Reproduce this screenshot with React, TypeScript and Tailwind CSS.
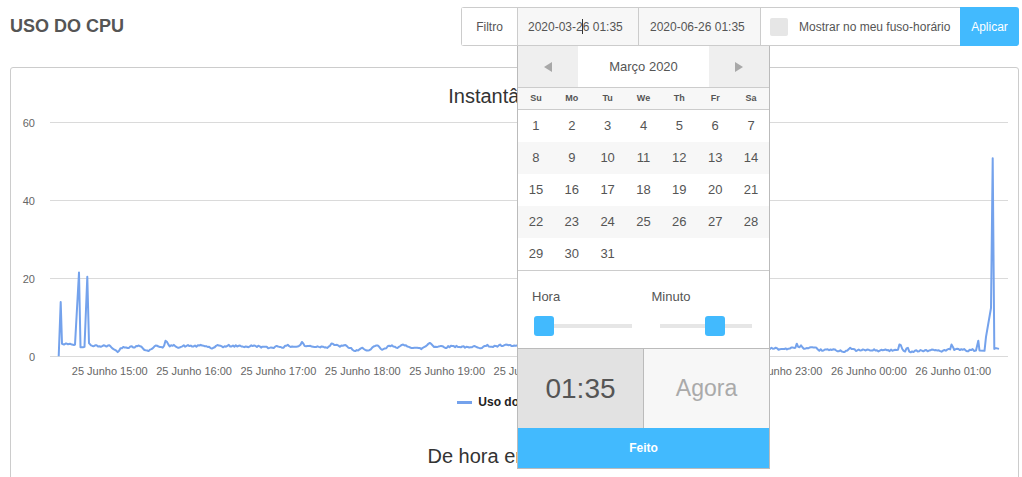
import { useMemo } from "react";

const days = [
  [1, 2, 3, 4, 5, 6, 7],
  [8, 9, 10, 11, 12, 13, 14],
  [15, 16, 17, 18, 19, 20, 21],
  [22, 23, 24, 25, 26, 27, 28],
  [29, 30, 31],
];

const weekDays = ["Su", "Mo", "Tu", "We", "Th", "Fr", "Sa"];

const hourLabels = [
  "25 Junho 15:00",
  "25 Junho 16:00",
  "25 Junho 17:00",
  "25 Junho 18:00",
  "25 Junho 19:00",
  "25 Junho 20:00",
  "25 Junho 21:00",
  "25 Junho 22:00",
  "25 Junho 23:00",
  "26 Junho 00:00",
  "26 Junho 01:00",
];

// small seeded generator so the series is the same on every render
const mulberry32 = (a: number) => () => {
  a |= 0;
  a = (a + 0x6d2b79f5) | 0;
  let t = Math.imul(a ^ (a >>> 15), 1 | a);
  t = (t + Math.imul(t ^ (t >>> 7), 61 | t)) ^ t;
  return ((t ^ (t >>> 14)) >>> 0) / 4294967296;
};

// [center x, amplitude, width]
const bumps: [number, number, number][] = [
  [117, -1.3, 3],
  [148, -1.1, 3],
  [166, 1.5, 1],
  [213, -0.6, 3],
  [268, -0.6, 3],
  [302, 1.2, 1],
  [332, 0.9, 1.5],
  [357, -1.3, 5],
  [370, -1.0, 3],
  [383, -1.0, 3],
  [420, -0.8, 3],
  [430, 0.9, 2],
  [470, -0.6, 3],
  [797, 1.2, 1.2],
  [801, 1.0, 1],
  [850, 0.4, 2],
  [900, 1.8, 0.8],
  [907, 1.2, 0.8],
  [952, 1.7, 0.8],
];

const baseLevel = (x: number) => {
  if (x < 560) return 2.6;
  if (x < 700) return 2.3;
  if (x < 800) return 1.9;
  if (x < 830) return 1.9 - ((x - 800) / 30) * 0.4;
  return 1.5;
};

const buildSeries = () => {
  const rnd = mulberry32(42);
  const pts: [number, number][] = [
    [58.7, 0],
    [60.7, 13.9],
    [62, 3.2],
    [64, 3.0],
    [66, 3.3],
    [68, 3.1],
    [70, 3.2],
    [72, 3.0],
    [74, 2.9],
    [75, 3.0],
    [79, 21.5],
    [80.5, 2.3],
    [83, 2.3],
    [84.5, 2.4],
    [87.3, 20.4],
    [89, 3.4],
    [91, 2.8],
  ];
  let n = 0;
  for (let x = 92.4; x < 975; x += 1.406) {
    n = 0.55 * n + 0.45 * (rnd() - 0.5) * 1.4;
    let v = baseLevel(x) + n;
    for (const [c, a, w] of bumps) {
      v += a * Math.exp(-((x - c) * (x - c)) / (2 * w * w));
    }
    pts.push([x, Math.max(0.8, v)]);
  }
  pts.push(
    [976, 1.5],
    [978.3, 4],
    [979.5, 1.5],
    [984.5, 1.4],
    [986, 5],
    [991, 12.4],
    [992.7, 50.8],
    [994.3, 1.9],
    [996, 2.1],
    [999, 1.9]
  );
  return pts;
};

// page x / value -> svg coordinates (svg starts at x 11, y 108)
const sx = (x: number) => x - 11;
const sy = (v: number) => 248.3 - 3.897 * v;

const CpuChart = () => {
  const path = useMemo(() => {
    const pts = buildSeries();
    return pts
      .map(([x, v], i) => `${i ? "L" : "M"}${sx(x).toFixed(1)} ${sy(v).toFixed(1)}`)
      .join(" ");
  }, []);

  return (
    <svg width="1007" height="280" className="block">
      {[60, 40, 20, 0].map((v, i) => (
        <g key={v}>
          <line x1={39} x2={997} y1={14.5 + i * 78} y2={14.5 + i * 78} stroke="#dadada" strokeWidth="1" />
          <text x={24} y={19 + i * 78} textAnchor="end" fontSize="11" fill="#666">
            {v}
          </text>
        </g>
      ))}
      {hourLabels.map((label, i) => (
        <text key={label} x={98.7 + i * 84.36} y={267} textAnchor="middle" fontSize="11" fill="#666">
          {label}
        </text>
      ))}
      <path d={path} fill="none" stroke="#74a2ec" strokeWidth="2" strokeLinejoin="round" />
    </svg>
  );
};

const Arrow = ({ dir }: { dir: "left" | "right" }) => (
  <svg width="8" height="10" viewBox="0 0 8 10">
    <path d={dir === "left" ? "M8 0 L0 5 L8 10 Z" : "M0 0 L8 5 L0 10 Z"} fill="#a8a8a8" />
  </svg>
);

const DatePicker = () => (
  <div className="absolute left-[-1px] top-[calc(100%+1px)] z-10 w-[253px] border-x border-b border-[#bbb] bg-white">
    <div className="flex h-[42px] items-stretch border-b border-[#ccc]">
      <div className="flex w-[60px] items-center justify-center bg-[#efefef]">
        <Arrow dir="left" />
      </div>
      <div className="flex flex-1 items-center justify-center text-[13px] text-[#555]">Março 2020</div>
      <div className="flex w-[60px] items-center justify-center bg-[#efefef]">
        <Arrow dir="right" />
      </div>
    </div>
    <div className="grid h-[22px] grid-cols-7 items-center border-b border-[#ccc] bg-[#f7f7f7]">
      {weekDays.map((d) => (
        <span key={d} className="text-center text-[9px] font-bold text-[#555]">
          {d}
        </span>
      ))}
    </div>
    {days.map((week, r) => (
      <div key={r} className={`grid h-[32px] grid-cols-7 items-center ${r % 2 ? "bg-[#f7f7f7]" : "bg-white"}`}>
        {week.map((d) => (
          <span key={d} className="text-center text-[13px] text-[#555]">
            {d}
          </span>
        ))}
      </div>
    ))}
    <div className="flex border-t border-[#ccc] pt-[18px] pb-[12px]">
      <div className="w-[126px] pl-[14px]">
        <div className="text-[13px] leading-[16px] text-[#555]">Hora</div>
        <div className="relative mt-[11px] ml-[2px] flex h-[20px] w-[98px] items-center">
          <div className="h-[4px] w-full bg-[#e6e6e6]" />
          <div className="absolute left-0 top-0 h-[20px] w-[20px] rounded-[3px] bg-[#42bafe]" />
        </div>
      </div>
      <div className="w-[126px] pl-[8px]">
        <div className="text-[13px] leading-[16px] text-[#555]">Minuto</div>
        <div className="relative mt-[11px] ml-[8px] flex h-[20px] w-[92px] items-center">
          <div className="h-[4px] w-full bg-[#e6e6e6]" />
          <div className="absolute left-[45px] top-0 h-[20px] w-[20px] rounded-[3px] bg-[#42bafe]" />
        </div>
      </div>
    </div>
    <div className="flex h-[80px] border-t border-[#bbb]">
      <div className="flex w-[126px] items-center justify-center border-r border-[#bbb] bg-[#e2e2e2] text-[28px] text-[#555]">
        01:35
      </div>
      <div className="flex flex-1 items-center justify-center bg-[#f7f7f7] text-[23px] text-[#aaa]">Agora</div>
    </div>
    <button className="flex h-[40px] w-full items-center justify-center bg-[#42bafe] text-[12px] font-bold text-white">
      Feito
    </button>
  </div>
);

const FilterBar = () => (
  <div className="flex h-[39px] items-stretch text-[12px] text-[#555]">
    <div className="flex rounded-l-[3px] border border-r-0 border-[#ccc]">
      <div className="flex w-[56px] items-center justify-center border-r border-[#ccc] bg-white">Filtro</div>
      <div className="relative flex w-[121px] items-center border-r border-[#ccc] bg-[#f7f7f7] px-[10px]">
        <span>2020-03-2</span>
        <span className="mx-[-0.5px] h-[15px] w-px bg-[#333]" />
        <span>6 01:35</span>
        <DatePicker />
      </div>
      <div className="flex w-[122px] items-center border-r border-[#ccc] bg-[#f7f7f7] px-[11px]">
        2020-06-26 01:35
      </div>
      <label className="flex w-[199px] items-center gap-[11px] bg-white pl-[9px]">
        <span className="h-[18px] w-[18px] rounded-[2px] bg-[#e6e6e6]" />
        <span>Mostrar no meu fuso-horário</span>
      </label>
    </div>
    <button className="w-[59px] rounded-r-[3px] bg-[#42bafe] text-[12px] text-white">Aplicar</button>
  </div>
);

export default function App() {
  return (
    <div className="h-[477px] overflow-hidden bg-white pl-[10px] pr-[3px] pt-[7px] font-['Liberation_Sans',Arial,sans-serif]">
      <div className="flex items-center justify-between">
        <h1 className="text-[18px] font-bold text-[#555]">USO DO CPU</h1>
        <FilterBar />
      </div>
      <div className="mt-[21px] h-[520px] rounded-[3px] border border-[#ccc] pt-[16px]">
        <h3 className="pr-[28px] text-center text-[20px] leading-[24px] text-[#333]">Instantâneo</h3>
        <CpuChart />
        <div className="mt-[4px] flex h-[20px] items-center justify-center gap-[6px] pr-[24px]">
          <span className="h-[3px] w-[15px] bg-[#74a2ec]" />
          <span className="text-[12px] font-bold text-[#222]">Uso do CPU</span>
        </div>
        <h3 className="mt-[32px] pr-[24px] text-center text-[20px] leading-[24px] text-[#333]">De hora em hora</h3>
      </div>
    </div>
  );
}
